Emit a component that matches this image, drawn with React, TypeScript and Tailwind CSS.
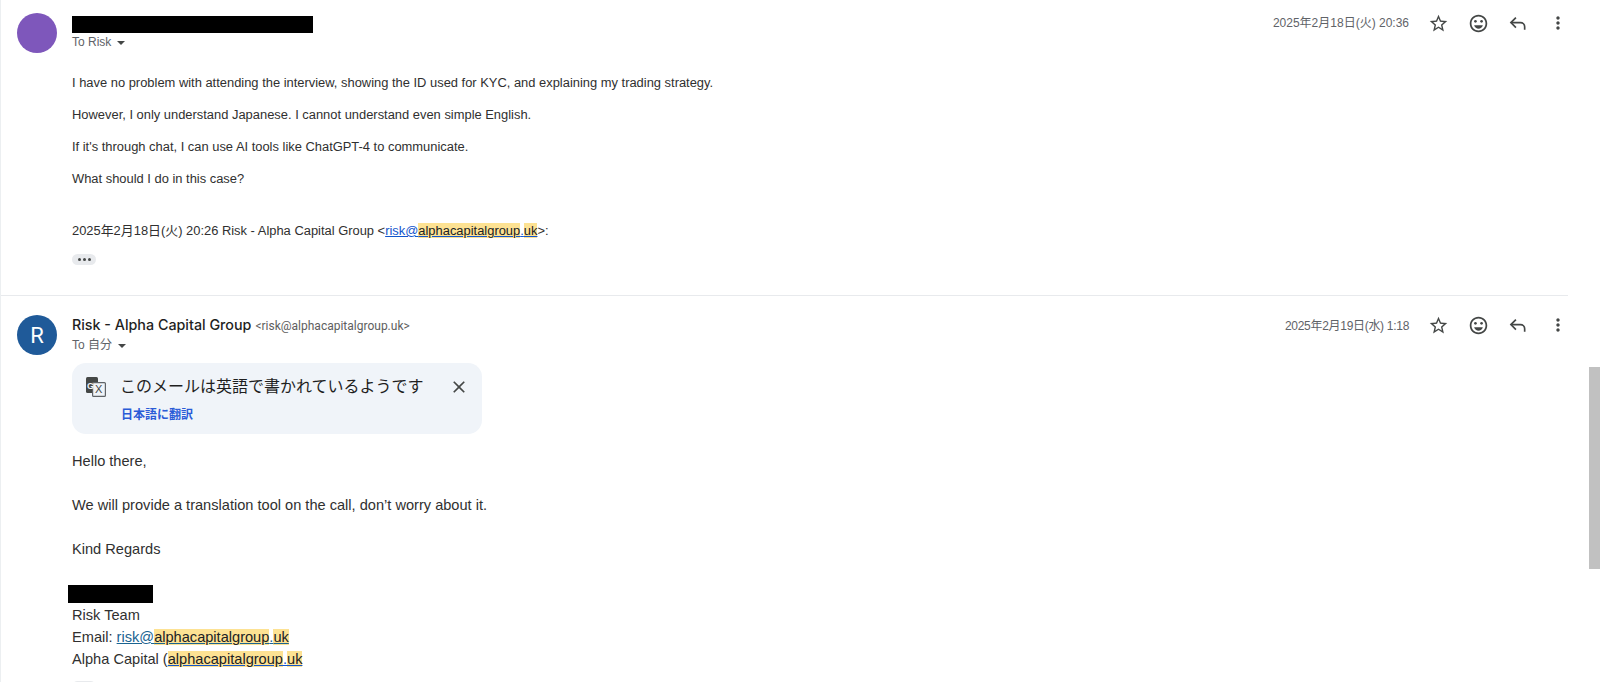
import React from 'react';
import { MdOutlineEmojiEmotions, MdStarBorder, MdClose, MdMoreVert } from 'react-icons/md';

const ARIAL = "font-['Liberation_Sans','Noto_Sans_CJK_JP',sans-serif]";

function ReplyIcon() {
  return (
    <svg width="20" height="20" viewBox="0 0 24 24" fill="none" stroke="#444746" strokeWidth="2">
      <path d="M9.5 5.5 3.5 11.5l6 6" />
      <path d="M3.5 11.5H15a5 5 0 0 1 5 5V20" />
    </svg>
  );
}

function TranslateIcon() {
  return (
    <svg width="20" height="20" viewBox="0 0 20 20" className="shrink-0">
      <rect x="0" y="0" width="12" height="16" rx="1.5" fill="#444746" />
      <rect x="6.6" y="5.6" width="12.8" height="13.8" rx="1" fill="#f0f4f9" stroke="#5f6368" strokeWidth="1.2" />
      <text x="1" y="11.5" fontSize="9" fontWeight="700" fill="#f0f4f9" fontFamily="Liberation Sans">G</text>
      <text x="9" y="16" fontSize="11" fill="#444746" fontFamily="Liberation Sans">X</text>
    </svg>
  );
}

function Actions() {
  return (
    <div className="-mr-[10px] flex items-center text-[#444746]">
      <span className="ml-[9px] grid w-[40px] place-items-center"><MdStarBorder size={21} /></span>
      <span className="grid w-[40px] place-items-center"><MdOutlineEmojiEmotions size={21} /></span>
      <span className="grid w-[40px] place-items-center"><ReplyIcon /></span>
      <span className="grid w-[40px] place-items-center"><MdMoreVert size={20} /></span>
    </div>
  );
}

function Caret() {
  return <span className="ml-[6px] inline-block border-x-[4px] border-t-[4px] border-x-transparent border-t-[#444746] align-middle" />;
}

function Hl({ children }: { children: React.ReactNode }) {
  return <span className="bg-[#fde293] text-[#202124]">{children}</span>;
}

const paragraphs = [
  'I have no problem with attending the interview, showing the ID used for KYC, and explaining my trading strategy.',
  'However, I only understand Japanese. I cannot understand even simple English.',
  "If it's through chat, I can use AI tools like ChatGPT-4 to communicate.",
  'What should I do in this case?',
];

export default function App() {
  return (
    <div className={`flex h-[682px] w-[1600px] overflow-hidden bg-white ${ARIAL}`}>
      <div className="w-[1568px] shrink-0 border-l border-[#eceff1]">
        {/* First message */}
        <div className="h-[296px] border-b border-[#e8eaed]">
          <div className="flex">
            <div className="ml-[16px] mt-[13px] h-[40px] w-[40px] shrink-0 rounded-full bg-[#7e57bb]" />
            <div className="ml-[15px] mt-[16px] flex-1">
              <div className="h-[17px] w-[241px] bg-black" />
              <div className="h-[18px] text-[12px] leading-[18px] text-[#5f6368]">
                To Risk
                <Caret />
              </div>
            </div>
            <div className="mt-[12px] flex h-[22px] items-center">
              <span className="text-[12px] text-[#5f6368]">2025年2月18日(火) 20:36</span>
              <Actions />
            </div>
          </div>
          <div className="ml-[71px] mt-[22px] text-[12.92px] leading-[16px] text-[#303030]">
            <div className="flex flex-col gap-[16px]">
              {paragraphs.map(p => (
                <p key={p}>{p}</p>
              ))}
            </div>
            <p className="mt-[36px]">
              2025年2月18日(火) 20:26 Risk - Alpha Capital Group &lt;
              <span className="text-[#1155cc] underline">risk@<Hl>alphacapitalgroup</Hl>.<Hl>uk</Hl></span>&gt;:
            </p>
            <div className="mt-[15px] flex h-[11px] w-[24px] items-center justify-center gap-[2px] rounded-full bg-[#e8eaed]">
              <span className="h-[3px] w-[3px] rounded-full bg-[#444746]" />
              <span className="h-[3px] w-[3px] rounded-full bg-[#444746]" />
              <span className="h-[3px] w-[3px] rounded-full bg-[#444746]" />
            </div>
          </div>
        </div>

        {/* Second message */}
        <div className="flex">
          <div className="ml-[16px] mt-[19px] grid h-[40px] w-[40px] shrink-0 place-items-center rounded-full bg-[#1f5a99] font-['Roboto'] text-[22px] text-white">
            R
          </div>
          <div className="ml-[15px] mt-[19px] flex-1">
            <div className="h-[20px] leading-[20px]">
              <span className="font-['Inter'] text-[14.3px] font-medium text-[#1f1f1f]">Risk - Alpha Capital Group</span>
              <span className="ml-[4px] font-['Roboto'] text-[12px] text-[#5e5e5e]">&lt;risk@alphacapitalgroup.uk&gt;</span>
            </div>
            <div className="h-[20px] text-[12px] leading-[20px] text-[#5f6368]">
              To 自分
              <Caret />
            </div>
          </div>
          <div className="mt-[18px] flex h-[22px] items-center">
            <span className="mt-[2px] text-[12px] tracking-[-0.3px] text-[#5f6368]">2025年2月19日(水) 1:18</span>
            <Actions />
          </div>
        </div>
        <div className="ml-[71px] mt-[8px] h-[71px] w-[410px] rounded-[14px] bg-[#f0f4f9] font-['Roboto','Noto_Sans_CJK_JP',sans-serif]">
          <div className="flex h-[47px] items-center pl-[14px]">
            <TranslateIcon />
            <span className="ml-[14px] w-[329px] text-[16px] text-[#1f1f1f]">このメールは英語で書かれているようです</span>
            <MdClose size={20} className="text-[#444746]" />
          </div>
          <div className="-mt-[4px] ml-[49px] text-[12px] font-bold text-[#2a5bd7]">日本語に翻訳</div>
        </div>
        <div className="ml-[71px] mt-[16px] text-[14.6px] leading-[22px] text-[#303030]">
          <p>Hello there,</p>
          <p className="mt-[22px]">We will provide a translation tool on the call, don’t worry about it.</p>
          <p className="mt-[22px]">Kind Regards</p>
          <div className="-ml-[4px] mt-[25px] h-[18px] w-[85px] bg-black" />
          <p className="mt-[1px]">Risk Team</p>
          <p>
            Email: <span className="text-[#1a6491] underline">risk@<Hl>alphacapitalgroup</Hl>.<Hl>uk</Hl></span>
          </p>
          <p>
            Alpha Capital (<span className="text-[#1155cc] underline"><Hl>alphacapitalgroup</Hl>.<Hl>uk</Hl></span>
          </p>
          <div className="mt-[11px] h-[11px] w-[24px] rounded-full bg-[#e8eaed]" />
        </div>
      </div>
      {/* Scrollbar */}
      <div className="flex-1 pl-[21px] pt-[367px]">
        <div className="h-[202px] w-[11px] bg-[#c1c1c1]" />
      </div>
    </div>
  );
}
